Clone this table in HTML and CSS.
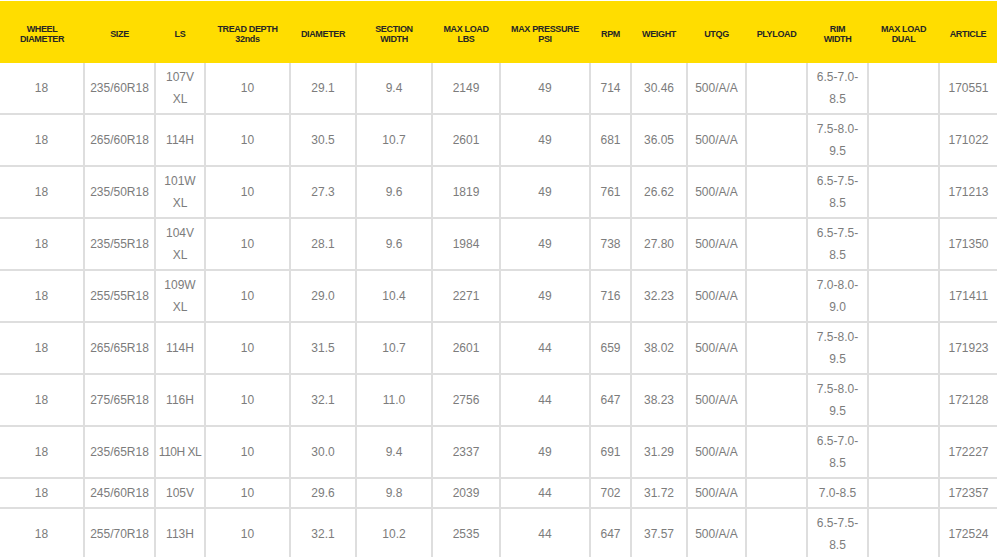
FILE: index.html
```html
<!DOCTYPE html>
<html>
<head>
<meta charset="utf-8">
<link rel="stylesheet" href="styles.css">
</head>
<body>
<table class="spec">
<colgroup>
<col class="w-wd"><col class="w-size"><col class="w-ls"><col class="w-tread"><col class="w-dia"><col class="w-sec"><col class="w-load"><col class="w-psi"><col class="w-rpm"><col class="w-wt"><col class="w-utqg"><col class="w-ply"><col class="w-rim"><col class="w-dual"><col class="w-art">
</colgroup>
<thead>
<tr>
<th>WHEEL<br>DIAMETER</th><th>SIZE</th><th>LS</th><th>TREAD DEPTH<br>32nds</th><th>DIAMETER</th><th>SECTION<br>WIDTH</th><th>MAX LOAD<br>LBS</th><th>MAX PRESSURE<br>PSI</th><th>RPM</th><th>WEIGHT</th><th>UTQG</th><th>PLYLOAD</th><th>RIM<br>WIDTH</th><th>MAX LOAD<br>DUAL</th><th>ARTICLE</th>
</tr>
</thead>
<tbody>
<tr><td>18</td><td>235/60R18</td><td>107V<br>XL</td><td>10</td><td>29.1</td><td>9.4</td><td>2149</td><td>49</td><td>714</td><td>30.46</td><td>500/A/A</td><td></td><td>6.5-7.0-<br>8.5</td><td></td><td>170551</td></tr>
<tr><td>18</td><td>265/60R18</td><td>114H</td><td>10</td><td>30.5</td><td>10.7</td><td>2601</td><td>49</td><td>681</td><td>36.05</td><td>500/A/A</td><td></td><td>7.5-8.0-<br>9.5</td><td></td><td>171022</td></tr>
<tr><td>18</td><td>235/50R18</td><td>101W<br>XL</td><td>10</td><td>27.3</td><td>9.6</td><td>1819</td><td>49</td><td>761</td><td>26.62</td><td>500/A/A</td><td></td><td>6.5-7.5-<br>8.5</td><td></td><td>171213</td></tr>
<tr><td>18</td><td>235/55R18</td><td>104V<br>XL</td><td>10</td><td>28.1</td><td>9.6</td><td>1984</td><td>49</td><td>738</td><td>27.80</td><td>500/A/A</td><td></td><td>6.5-7.5-<br>8.5</td><td></td><td>171350</td></tr>
<tr><td>18</td><td>255/55R18</td><td>109W<br>XL</td><td>10</td><td>29.0</td><td>10.4</td><td>2271</td><td>49</td><td>716</td><td>32.23</td><td>500/A/A</td><td></td><td>7.0-8.0-<br>9.0</td><td></td><td>171411</td></tr>
<tr><td>18</td><td>265/65R18</td><td>114H</td><td>10</td><td>31.5</td><td>10.7</td><td>2601</td><td>44</td><td>659</td><td>38.02</td><td>500/A/A</td><td></td><td>7.5-8.0-<br>9.5</td><td></td><td>171923</td></tr>
<tr><td>18</td><td>275/65R18</td><td>116H</td><td>10</td><td>32.1</td><td>11.0</td><td>2756</td><td>44</td><td>647</td><td>38.23</td><td>500/A/A</td><td></td><td>7.5-8.0-<br>9.5</td><td></td><td>172128</td></tr>
<tr><td>18</td><td>235/65R18</td><td class="tight">110H XL</td><td>10</td><td>30.0</td><td>9.4</td><td>2337</td><td>49</td><td>691</td><td>31.29</td><td>500/A/A</td><td></td><td>6.5-7.0-<br>8.5</td><td></td><td>172227</td></tr>
<tr><td>18</td><td>245/60R18</td><td>105V</td><td>10</td><td>29.6</td><td>9.8</td><td>2039</td><td>44</td><td>702</td><td>31.72</td><td>500/A/A</td><td></td><td>7.0-8.5</td><td></td><td>172357</td></tr>
<tr><td>18</td><td>255/70R18</td><td>113H</td><td>10</td><td>32.1</td><td>10.2</td><td>2535</td><td>44</td><td>647</td><td>37.57</td><td>500/A/A</td><td></td><td>6.5-7.5-<br>8.5</td><td></td><td>172524</td></tr>
</tbody>
</table>
</body>
</html>
```
FILE: styles.css
```css
html, body {
  margin: 0;
  padding: 0;
  background: #ffffff;
}
body {
  padding-top: 1px;
  font-family: "Liberation Sans", Arial, sans-serif;
}
.spec {
  border-collapse: collapse;
  table-layout: fixed;
  width: 997px;
}
.w-wd { width: 84px; }
.w-size { width: 71px; }
.w-ls { width: 50px; }
.w-tread { width: 85px; }
.w-dia { width: 66px; }
.w-sec { width: 76px; }
.w-load { width: 68px; }
.w-psi { width: 90px; }
.w-rpm { width: 41px; }
.w-wt { width: 56px; }
.w-utqg { width: 59px; }
.w-ply { width: 61px; }
.w-rim { width: 61px; }
.w-dual { width: 71px; }
.w-art { width: 58px; }

.spec th {
  background: #ffdd00;
  color: #262626;
  font-size: 9px;
  font-weight: bold;
  letter-spacing: -0.35px;
  line-height: 10px;
  height: 59px;
  padding: 3px 2px 0;
  text-align: center;
  vertical-align: middle;
  border: none;
}
.spec td {
  color: #7c7c7c;
  font-size: 12px;
  line-height: 22px;
  padding: 3px 2px;
  text-align: center;
  vertical-align: middle;
  white-space: nowrap;
  border: 2px solid #dedede;
  border-top: none;
}
.spec td.tight {
  letter-spacing: -0.5px;
  padding: 3px 0;
}
.spec td:first-child {
  border-left: none;
}
.spec td:last-child {
  border-right: none;
}
```
